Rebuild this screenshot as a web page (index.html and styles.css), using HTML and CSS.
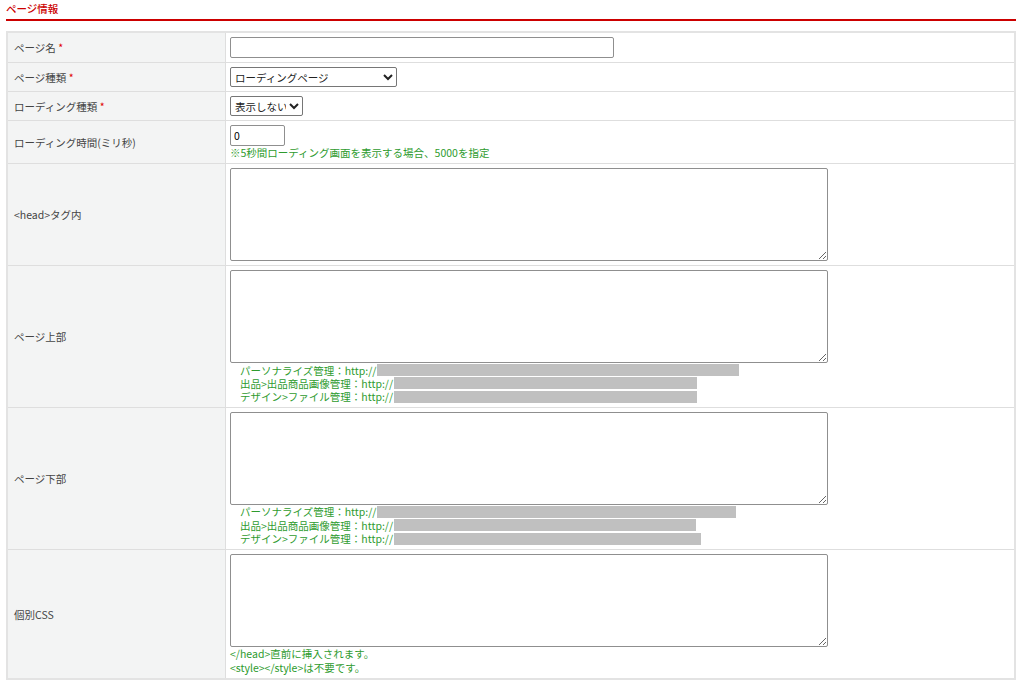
FILE: index.html
```html
<!DOCTYPE html>
<html lang="ja">
<head>
  <meta charset="UTF-8">
  <title>ページ情報</title>
  <link rel="stylesheet" href="styles.css">
</head>
<body>
  <div class="section">
    <h2 class="section-title">ページ情報</h2>

    <table class="form-table">
      <tr class="row-short">
        <th>ページ名 <span class="req">*</span></th>
        <td><input type="text" class="input-name"></td>
      </tr>
      <tr class="row-short">
        <th>ページ種類 <span class="req">*</span></th>
        <td>
          <select class="select-type">
            <option>ローディングページ</option>
          </select>
        </td>
      </tr>
      <tr class="row-short">
        <th>ローディング種類 <span class="req">*</span></th>
        <td>
          <select class="select-loading">
            <option>表示しない</option>
          </select>
        </td>
      </tr>
      <tr>
        <th>ローディング時間(ミリ秒)</th>
        <td>
          <input type="text" class="input-time" value="0">
          <div class="note">※5秒間ローディング画面を表示する場合、5000を指定</div>
        </td>
      </tr>
      <tr>
        <th>&lt;head&gt;タグ内</th>
        <td><textarea></textarea></td>
      </tr>
      <tr>
        <th>ページ上部</th>
        <td>
          <textarea></textarea>
          <ul class="urls">
            <li>パーソナライズ管理：http://<span class="mask" style="width:362px"></span></li>
            <li>出品&gt;出品商品画像管理：http://<span class="mask" style="width:303px"></span></li>
            <li>デザイン&gt;ファイル管理：http://<span class="mask" style="width:303px"></span></li>
          </ul>
        </td>
      </tr>
      <tr>
        <th>ページ下部</th>
        <td>
          <textarea></textarea>
          <ul class="urls">
            <li>パーソナライズ管理：http://<span class="mask" style="width:359px"></span></li>
            <li>出品&gt;出品商品画像管理：http://<span class="mask" style="width:302px"></span></li>
            <li>デザイン&gt;ファイル管理：http://<span class="mask" style="width:307px"></span></li>
          </ul>
        </td>
      </tr>
      <tr>
        <th>個別CSS</th>
        <td>
          <textarea></textarea>
          <div class="note">&lt;/head&gt;直前に挿入されます。</div>
          <div class="note">&lt;style&gt;&lt;/style&gt;は不要です。</div>
        </td>
      </tr>
    </table>
  </div>
</body>
</html>
```

FILE: styles.css
```css
body {
  margin: 0;
  padding: 0;
  font-family: "Noto Sans CJK JP", "Noto Sans", sans-serif;
  font-size: 10.5px;
  color: #333;
  background: #fff;
}

.section {
  margin: 0 8px 0 6px;
}

.section-title {
  margin: 0;
  padding: 1px 0 2px 0;
  height: 16px;
  font-size: 10.5px;
  line-height: 15px;
  font-weight: 500;
  color: #cc0000;
  border-bottom: 2px solid #cc0000;
}

.form-table {
  width: 100%;
  margin-top: 10px;
  border-collapse: collapse;
  border: 2px solid #e3e3e3;
}

.form-table th,
.form-table td {
  border: 1px solid #dedede;
  padding: 4px;
  vertical-align: middle;
  text-align: left;
}

.form-table th {
  width: 207px;
  background: #f3f4f4;
  font-weight: normal;
  font-size: 10.5px;
  color: #444;
  padding-left: 6px;
}

.row-short th,
.row-short td {
  height: 20px;
}

.req {
  color: #e00000;
}

input[type="text"] {
  box-sizing: border-box;
  height: 21px;
  margin: 0;
  padding: 1px 3px;
  font-family: inherit;
  font-size: 10.5px;
  border: 1px solid #8f8f8f;
  border-radius: 2px;
  display: block;
}

.input-name { width: 384px; }
.input-time { width: 55px; height: 20px; }

select {
  height: 20px;
  margin: 0;
  font-family: inherit;
  font-size: 10.5px;
  color: #222;
  background-color: #fff;
  border: 1px solid #767676;
  border-radius: 2px;
  display: block;
}

.select-type { width: 167px; }
.select-loading { width: 73px; }

textarea {
  box-sizing: border-box;
  display: block;
  width: 598px;
  height: 93px;
  margin: 0;
  border: 1px solid #8f8f8f;
  border-radius: 2px;
}

.note {
  color: #2e9b2e;
  font-size: 10.5px;
  line-height: 13.4px;
}

.urls {
  list-style: none;
  margin: 0;
  padding: 0 0 0 10px;
  color: #2e9b2e;
  font-size: 10.5px;
  line-height: 13px;
}

.urls li {
  display: flex;
  align-items: center;
  height: 13.3px;
}

.mask {
  display: inline-block;
  height: 12px;
  margin-left: 1px;
  background: #c0c0c0;
}
```
